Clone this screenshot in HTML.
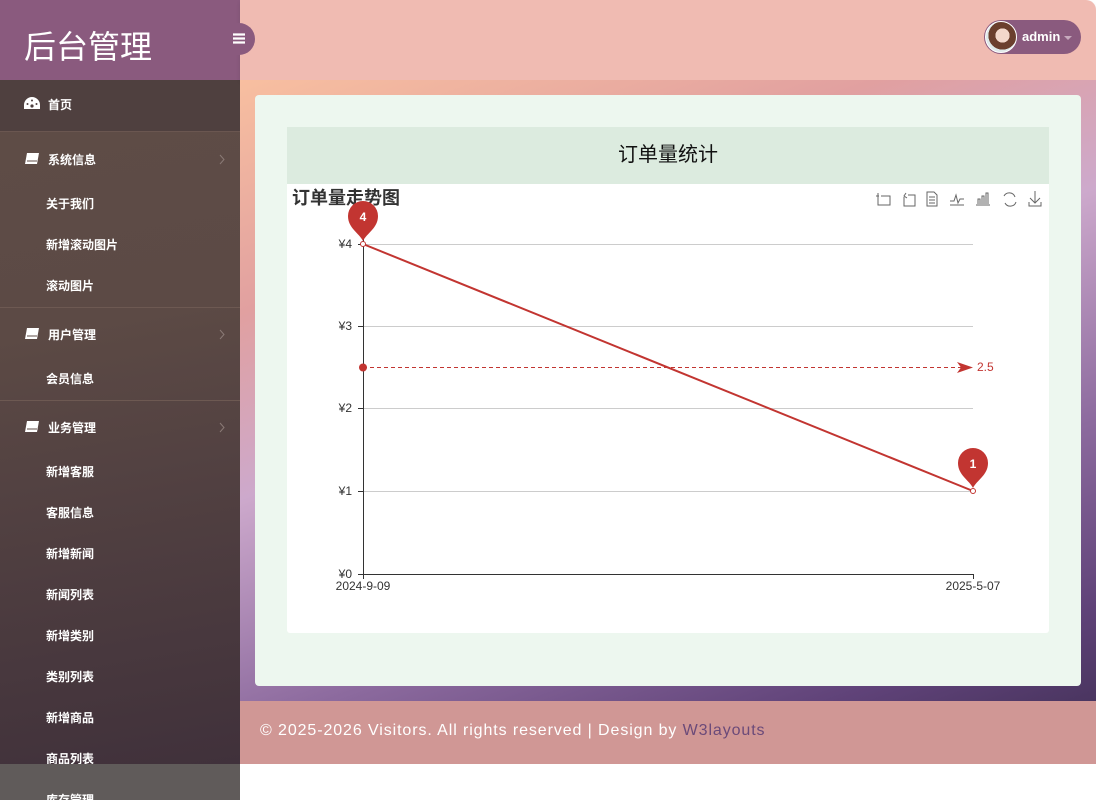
<!DOCTYPE html>
<html><head><meta charset="utf-8"><style>
*{margin:0;padding:0;box-sizing:border-box}
body{width:1096px;height:800px;overflow:hidden;background:#fff;font-family:"Liberation Sans","Noto Sans CJK SC",sans-serif;position:relative}
.side{position:absolute;left:0;top:0;width:240px;height:800px;background:linear-gradient(170deg,#5f4d47 0%,#5c4a45 40%,#3e2f3a 100%);overflow:hidden}
.logo{height:80px;background:#8a5a7e;color:#fff;font-size:32px;padding:22px 0 0 24px;letter-spacing:0}
.home{height:52px;background:#4f403f;border-bottom:1px solid #6a5650}
.it{position:absolute;color:#fff;font-size:12px;font-weight:bold}
.div{position:absolute;left:0;width:240px;height:1px;background:#6d5952}
.arr{position:absolute;left:219px}
.gray{position:absolute;left:0;top:764px;width:240px;height:36px;background:#605b5a}
.top{position:absolute;left:240px;top:0;width:856px;height:80px;background:#f0bbb2;border-top-right-radius:10px;box-shadow:0 2px 4px rgba(0,0,0,.1)}
.main{position:absolute;left:240px;top:80px;width:856px;height:621px;background:linear-gradient(160deg,#f8bfa0 0%,#e1a0a0 25%,#cda9cc 45%,#8c6a9e 70%,#5f4278 90%,#4a3560 100%)}
.card{position:absolute;left:255px;top:95px;width:826px;height:591px;background:#edf7ef;border-radius:4px}
.box{position:absolute;left:287px;top:127px;width:762px;height:506px;background:#fff;border-radius:3px}
.bh{height:57px;background:#dcebdf;text-align:center;font-size:20px;line-height:57px;color:#111}
.foot{position:absolute;left:240px;top:701px;width:856px;height:63px;background:#d09795;color:#fff;font-size:16px;padding:21px 0 0 20px;letter-spacing:0.9px}
.foot span{color:#6b4a79}
.user{position:absolute;left:984px;top:20px;width:97px;height:34px;background:#8a5a7e;border-radius:17px}
.av{position:absolute;left:1px;top:1px;width:32px;height:32px;border-radius:50%;background:radial-gradient(circle at 55% 45%,#f3d8cc 0 30%,#6b3f2e 31% 60%,#dfe9ea 61%);border:1px solid #fff}
.tog{position:absolute;left:222px;top:23px;width:33px;height:32px;border-radius:0 16px 16px 0;background:#8a5a7e;color:#fff}
</style></head><body>
<div class="side">
<div class="logo">后台管理</div>
<div class="home"></div>
<svg style="position:absolute;left:24px;top:97px" width="16" height="13" viewBox="0 0 16 13"><path d="M8 0A8 8 0 0 0 0 8v4h16V8A8 8 0 0 0 8 0z" fill="#fff"/><circle cx="8" cy="9" r="1.6" fill="#4f403f"/><circle cx="3.5" cy="7" r="1" fill="#4f403f"/><circle cx="12.5" cy="7" r="1" fill="#4f403f"/><circle cx="8" cy="3.5" r="1" fill="#4f403f"/></svg>
<div class="it" style="left:48px;top:96px">首页</div>
<svg style="position:absolute;left:24px;top:152px" width="16" height="13"><path d="M3 1h12l-2 11H1z" fill="#fff"/><path d="M3 9h10" stroke="#5f4d47"/></svg>
<div class="it" style="left:48px;top:151px">系统信息</div><svg class="arr" style="top:154px" width="6" height="11"><path d="M1 1l4 4.5L1 10" stroke="#8a7a76" fill="none"/></svg>
<div class="it" style="left:46px;top:195px">关于我们</div>
<div class="it" style="left:46px;top:236px">新增滚动图片</div>
<div class="it" style="left:46px;top:277px">滚动图片</div>
<div class="div" style="top:307px"></div>
<svg style="position:absolute;left:24px;top:327px" width="16" height="13"><path d="M3 1h12l-2 11H1z" fill="#fff"/><path d="M3 9h10" stroke="#5f4d47"/></svg>
<div class="it" style="left:48px;top:326px">用户管理</div><svg class="arr" style="top:329px" width="6" height="11"><path d="M1 1l4 4.5L1 10" stroke="#8a7a76" fill="none"/></svg>
<div class="it" style="left:46px;top:370px">会员信息</div>
<div class="div" style="top:400px"></div>
<svg style="position:absolute;left:24px;top:420px" width="16" height="13"><path d="M3 1h12l-2 11H1z" fill="#fff"/><path d="M3 9h10" stroke="#5f4d47"/></svg>
<div class="it" style="left:48px;top:419px">业务管理</div><svg class="arr" style="top:422px" width="6" height="11"><path d="M1 1l4 4.5L1 10" stroke="#8a7a76" fill="none"/></svg>
<div class="it" style="left:46px;top:463px">新增客服</div>
<div class="it" style="left:46px;top:504px">客服信息</div>
<div class="it" style="left:46px;top:545px">新增新闻</div>
<div class="it" style="left:46px;top:586px">新闻列表</div>
<div class="it" style="left:46px;top:627px">新增类别</div>
<div class="it" style="left:46px;top:668px">类别列表</div>
<div class="it" style="left:46px;top:709px">新增商品</div>
<div class="it" style="left:46px;top:750px">商品列表</div>
<div class="gray"></div>
<div class="it" style="left:46px;top:791px">库存管理</div>
</div>
<div class="top"></div>
<div class="tog"><svg style="position:absolute;left:11px;top:10px" width="12" height="11"><path d="M0 1.5h12M0 5.5h12M0 9.5h12" stroke="#fff" stroke-width="2.2"/></svg></div>
<div class="user"><div class="av"></div><div style="position:absolute;left:38px;top:9px;color:#fff;font-size:13px;font-weight:bold">admin</div><div style="position:absolute;left:80px;top:16px;border:4px solid transparent;border-top-color:#c7a9bd"></div></div>
<div class="main"></div>
<div class="card"></div>
<div class="box"><div class="bh">订单量统计</div></div>
<svg style="position:absolute;left:287px;top:184px" width="762" height="449" viewBox="287 184 762 449" font-family="Liberation Sans, Noto Sans CJK SC, sans-serif">
<text x="292" y="204" font-size="18" font-weight="bold" fill="#333">订单量走势图</text>
<g stroke="#666" fill="none" stroke-width="1">
<path d="M878 193v12h12v-9h-9M876 196h3"/>
<path d="M904 197v9h11v-11h-7M906 193l-2 3 3 2"/>
<path d="M927 192h7l3 3v11h-10zM929 197h6M929 200h6M929 203h6"/>
<path d="M950 205h14M950 201h4l2-6 2 8 2-4h4"/>
<path d="M976 205h14M978 204v-5h2v5M982 204v-8h2v8M986 204v-11h2v11"/>
<path d="M1004 196a6 6 0 0 1 11 1M1016 202a6 6 0 0 1-11 1"/>
<path d="M1035 191v12M1030 198l5 5 5-5M1029 202v4h12v-4"/>
</g>
<g stroke="#ccc"><path d="M363 244.5h610M363 326.5h610M363 408.5h610M363 491.5h610"/></g>
<path d="M363.5 238v337M358 574.5h615M973.5 574v5M363.5 574v5M358 244.5h5M358 326.5h5M358 408.5h5M358 491.5h5" stroke="#333"/>
<g font-size="12" fill="#333" text-anchor="end"><text x="352" y="248">¥4</text><text x="352" y="330">¥3</text><text x="352" y="412">¥2</text><text x="352" y="495">¥1</text><text x="352" y="578">¥0</text></g>
<g font-size="12" fill="#333" text-anchor="middle"><text x="363" y="590">2024-9-09</text><text x="973" y="590">2025-5-07</text></g>
<path d="M363 367.5H965" stroke="#c23531" stroke-dasharray="4,3"/>
<path d="M957 362l16 5.5-16 5.5 4-5.5z" fill="#c23531"/>
<circle cx="363" cy="367.5" r="4" fill="#c23531"/>
<text x="977" y="371" font-size="12" fill="#c23531">2.5</text>
<path d="M363 244L973 491" stroke="#c23531" stroke-width="2"/>
<circle cx="363" cy="244" r="2.5" fill="#fff" stroke="#c23531"/>
<circle cx="973" cy="491" r="2.5" fill="#fff" stroke="#c23531"/>
<path d="M363 241c-4-8-15-13-15-25a15 15 0 0 1 30 0c0 12-11 17-15 25z" fill="#c23531"/>
<text x="363" y="221" font-size="12" font-weight="bold" fill="#fff" text-anchor="middle">4</text>
<path d="M973 488c-4-8-15-13-15-25a15 15 0 0 1 30 0c0 12-11 17-15 25z" fill="#c23531"/>
<text x="973" y="468" font-size="12" font-weight="bold" fill="#fff" text-anchor="middle">1</text>
</svg>
<div class="foot">© 2025-2026 Visitors. All rights reserved | Design by <span>W3layouts</span></div>
</body></html>
